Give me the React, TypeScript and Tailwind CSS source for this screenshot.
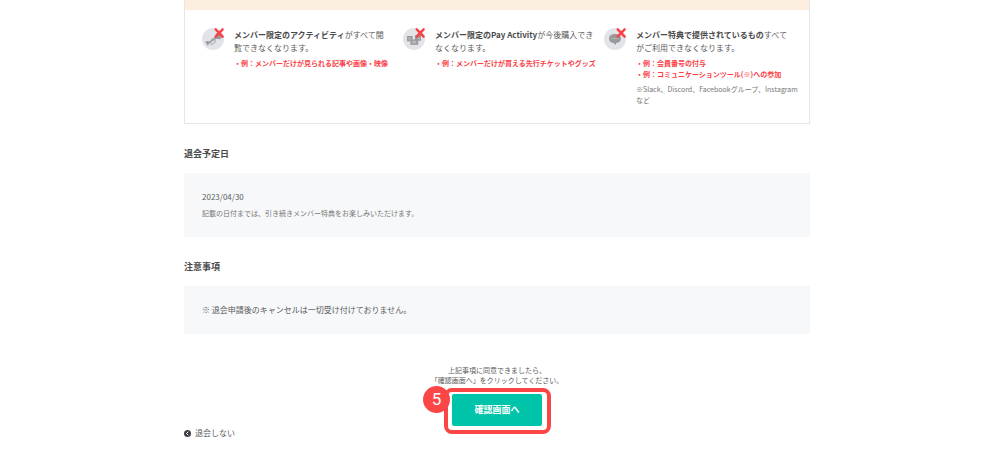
import React from 'react';

// 失われる特典に付ける赤いバツ印
const CrossMark = () => (
  <path d="M41 4 L62 26 M62 4 L41 26" stroke="#fa4046" strokeWidth="7" strokeLinecap="round" fill="none" />
);

const IconBase: React.FC<{ children: React.ReactNode }> = ({ children }) => (
  <svg viewBox="0 0 66 66" className="w-[22px] h-[22px] shrink-0 overflow-visible" aria-hidden="true">
    <circle cx="33" cy="33" r="33" fill="#e2e4e9" />
    {children}
    <CrossMark />
  </svg>
);

const TrumpetIcon = () => (
  <IconBase>
    <path d="M15 47 L50 25" stroke="#9b9b9b" strokeWidth="5" fill="none" />
    <path d="M9 41 L18 54 L23 43 L17 39 Z" fill="#9b9b9b" />
    <path d="M24 42 L38 33 L40 42 L28 50 Z" stroke="#a5a5a5" strokeWidth="3" fill="none" />
    <path d="M28 35 L33 32 M35 30 L40 27" stroke="#9b9b9b" strokeWidth="3" fill="none" />
    <circle cx="50" cy="24" r="10" fill="#9b9b9b" />
  </IconBase>
);

const TicketIcon = () => (
  <IconBase>
    <rect x="12" y="24" width="17" height="16" fill="#9b9b9b" />
    <rect x="22" y="34" width="24" height="17" fill="#a1a1a1" />
    <path d="M36 22 L54 18 V38 H36 Z" fill="#9b9b9b" />
    <path d="M17 35 L20 28 L23 35 M31 40 H37 V45 H31 Z M43 28 L48 33 L51 29" stroke="#d0d0d2" strokeWidth="2" fill="none" />
  </IconBase>
);

const BubbleIcon = () => (
  <IconBase>
    <path
      d="M33 18 C44 18 51 24 51 32 C51 39 45 44 37 45 L34 51 L29 45 C20 44 15 39 15 32 C15 24 22 18 33 18 Z"
      fill="#999999"
    />
    <path d="M22 32 H44" stroke="#bdbdbf" strokeWidth="3" strokeDasharray="3 1" />
  </IconBase>
);

interface BenefitProps {
  icon: React.ReactNode;
  children: React.ReactNode;
  examples: string[];
  note?: React.ReactNode;
}

const Benefit: React.FC<BenefitProps> = ({ icon, children, examples, note }) => (
  <li className="flex gap-[10px]">
    {icon}
    <div className="min-w-0">
      <p className="text-[8px] leading-[13px]">{children}</p>
      <ul className="mt-1 text-[7px] leading-[11px] font-bold text-[#fa4046]">
        {examples.map((text) => (
          <li key={text}>・{text}</li>
        ))}
      </ul>
      {note && <p className="mt-1 text-[7px] leading-[11px] text-[#777777]">{note}</p>}
    </div>
  </li>
);

const Section: React.FC<{ title: string; children: React.ReactNode }> = ({ title, children }) => (
  <section className="mt-[22px]">
    <h2 className="text-[9px] leading-4 font-bold text-[#4a4a4a]">{title}</h2>
    <div className="mt-[11px] bg-[#f6f8fa] p-[18px]">{children}</div>
  </section>
);

export default function App() {
  return (
    <main
      lang="ja"
      className="bg-white pr-[6px] text-[#5a5a5a] font-['Noto_Sans_CJK_JP','Noto_Sans',sans-serif]"
    >
      <div className="mx-auto max-w-[626px]">
        {/* 退会すると使えなくなる特典 */}
        <div className="border border-t-0 border-[#e6e6e6]">
          <div className="h-[10px] bg-[#fbeedf]" />
          <ul className="grid grid-cols-3 pt-[18px] pb-[17px] pl-[17px] pr-[4px]">
            <Benefit icon={<TrumpetIcon />} examples={['例：メンバーだけが見られる記事や画像・映像']}>
              <b className="text-[#4a4a4a]">メンバー限定のアクティビティ</b>がすべて閲
              <br />
              覧できなくなります。
            </Benefit>
            <Benefit icon={<TicketIcon />} examples={['例：メンバーだけが買える先行チケットやグッズ']}>
              <b className="text-[#4a4a4a]">メンバー限定のPay Activity</b>が今後購入でき
              <br />
              なくなります。
            </Benefit>
            <Benefit
              icon={<BubbleIcon />}
              examples={['例：会員番号の付与', '例：コミュニケーションツール(※)への参加']}
              note={
                <>
                  ※Slack、Discord、Facebookグループ、Instagram
                  <br />
                  など
                </>
              }
            >
              <b className="text-[#4a4a4a]">メンバー特典で提供されているもの</b>すべて
              <br />
              がご利用できなくなります。
            </Benefit>
          </ul>
        </div>

        <Section title="退会予定日">
          <p className="text-[8px] leading-3">2023/04/30</p>
          <p className="mt-[5px] text-[7px] leading-[11px] text-[#777777]">
            記載の日付までは、引き続きメンバー特典をお楽しみいただけます。
          </p>
        </Section>

        <Section title="注意事項">
          <p className="text-[8px] leading-3">※ 退会申請後のキャンセルは一切受け付けておりません。</p>
        </Section>

        <div className="mt-[31px] flex flex-col items-center">
          <p className="text-center text-[7px] leading-[10px]">
            上記事項に同意できましたら、
            <br />
            「確認画面へ」をクリックしてください。
          </p>
          <div className="relative mt-[9px]">
            <button
              type="button"
              className="block h-8 w-[90px] rounded-[2px] bg-[#00c4aa] text-[9px] font-bold text-white"
            >
              確認画面へ
            </button>
            {/* 手順の強調枠と番号 */}
            <div className="pointer-events-none absolute -left-2 -right-[9px] -top-[6px] -bottom-2 rounded-lg border-4 border-[#fa4646]" />
            <span className="absolute -left-[29px] -top-2 flex size-[27px] items-center justify-center rounded-full bg-[#fa4646] font-['Roboto',sans-serif] text-[17px] leading-none text-white">
              5
            </span>
          </div>
        </div>

        <a href="#" className="mt-px flex w-fit items-center gap-1 text-[8px] leading-3">
          <svg viewBox="0 0 14 14" className="size-[7px]" aria-hidden="true">
            <circle cx="7" cy="7" r="7" fill="#3c4148" />
            <path d="M8.5 3.5 L5 7 L8.5 10.5" stroke="#ffffff" strokeWidth="2" fill="none" />
          </svg>
          退会しない
        </a>
      </div>
    </main>
  );
}
